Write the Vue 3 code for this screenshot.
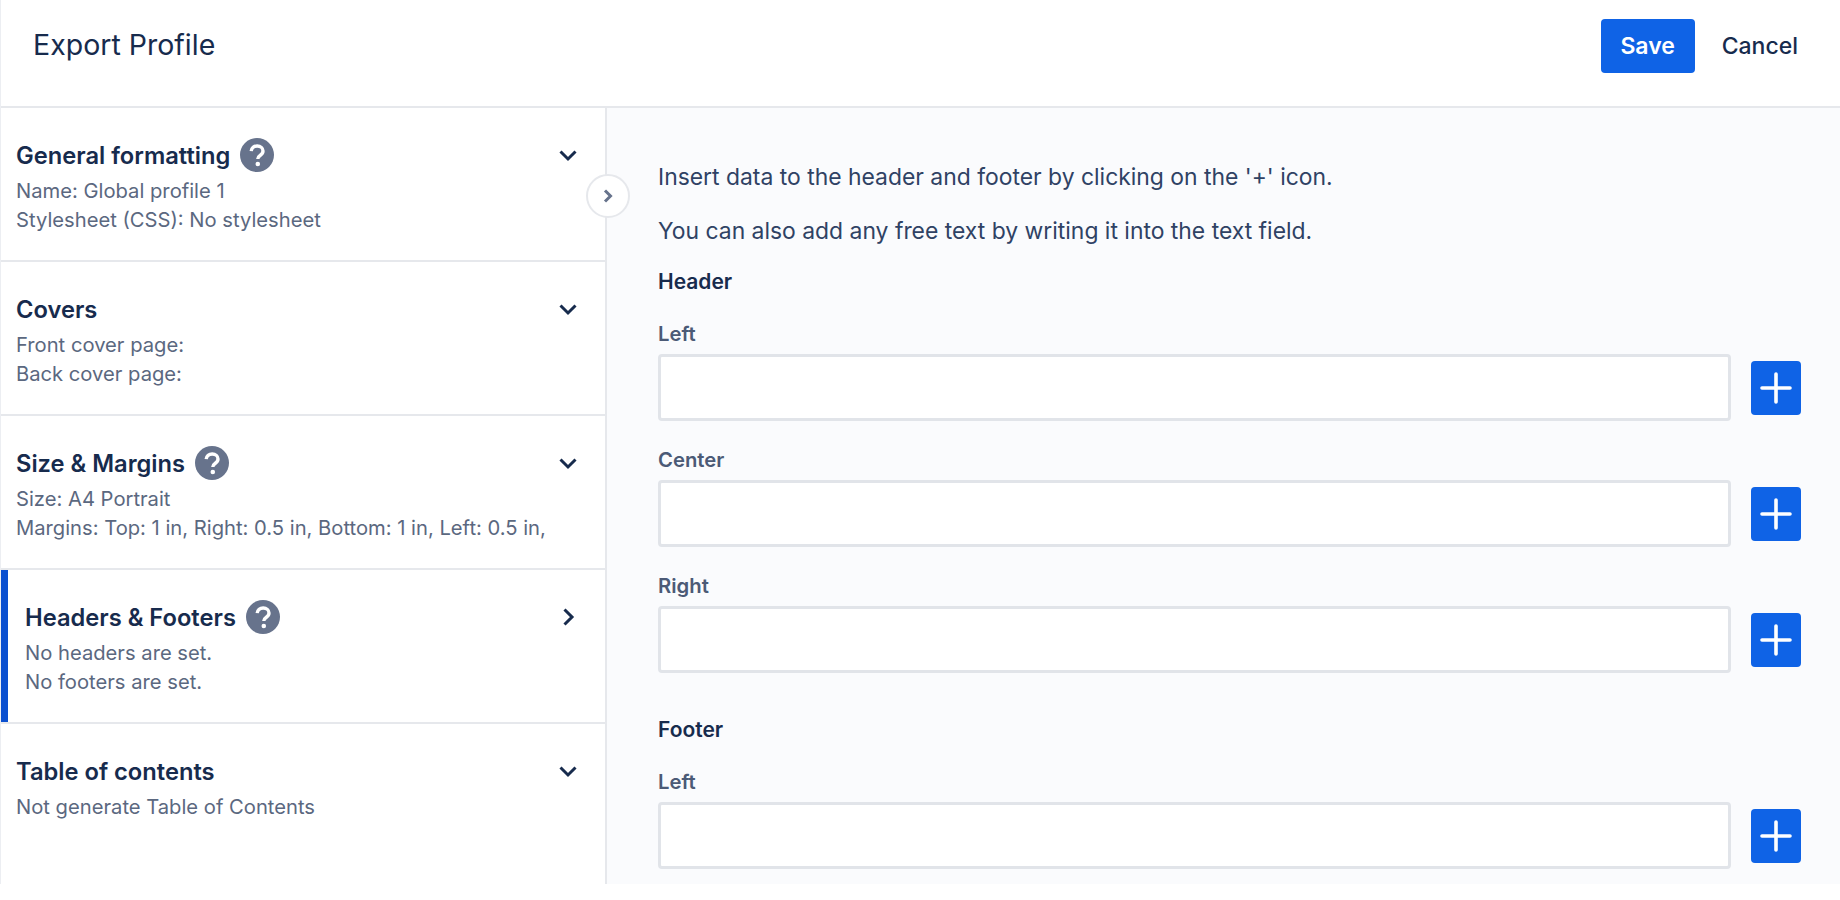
<script setup>
const sections = [
  { title: 'General formatting', help: true, lines: ['Name: Global profile 1', 'Stylesheet (CSS): No stylesheet'] },
  { title: 'Covers', help: false, lines: ['Front cover page:', 'Back cover page:'] },
  { title: 'Size & Margins', help: true, lines: ['Size: A4 Portrait', 'Margins: Top: 1 in, Right: 0.5 in, Bottom: 1 in, Left: 0.5 in,'] },
  { title: 'Headers & Footers', help: true, active: true, lines: ['No headers are set.', 'No footers are set.'] },
  { title: 'Table of contents', help: false, lines: ['Not generate Table of Contents'] },
]
const groups = [
  { name: 'Header', fields: ['Left', 'Center', 'Right'] },
  { name: 'Footer', fields: ['Left'] },
]
</script>

<template>
  <div class="page">
    <header class="topbar">
      <h1 class="title">Export Profile</h1>
      <div class="actions">
        <button class="save">Save</button>
        <button class="cancel">Cancel</button>
      </div>
    </header>
    <div class="body">
      <aside class="sidebar">
        <section v-for="s in sections" :key="s.title" class="section" :class="{ active: s.active }">
          <div class="section-head">
            <h2 class="section-title">{{ s.title }}</h2>
            <svg v-if="s.help" class="help" viewBox="0 0 34 34">
              <circle cx="17" cy="17" r="17" fill="#67738c" />
              <path d="M11.200 13.200c.3-3.200 2.800-5.200 6-5.200 3.400 0 5.800 2.100 5.800 5 0 2.300-1.300 3.400-2.900 4.500-1.500 1-2.300 1.700-2.300 3.500" fill="none" stroke="#fff" stroke-width="3.400" />
              <circle cx="17.800" cy="26" r="2.300" fill="#fff" />
            </svg>
            <svg class="chev" viewBox="0 0 20 20">
              <path v-if="s.active" d="M6.500 2.500 14 10l-7.500 7.500" />
              <path v-else d="M2.500 6.500 10 14l7.500-7.500" />
            </svg>
          </div>
          <p v-for="l in s.lines" :key="l" class="line">{{ l }}</p>
        </section>
      </aside>
      <main class="main">
        <p class="intro">Insert data to the header and footer by clicking on the '+' icon.</p>
        <p class="intro">You can also add any free text by writing it into the text field.</p>
        <div v-for="g in groups" :key="g.name" class="group">
          <h3 class="group-name">{{ g.name }}</h3>
          <div v-for="f in g.fields" :key="f" class="field">
            <label class="label">{{ f }}</label>
            <div class="row">
              <input class="input" type="text" />
              <button class="add" aria-label="Add">
                <svg viewBox="0 0 32 32" width="32" height="32">
                  <path d="M16 2v28M2 16h28" stroke="#fff" stroke-width="3.600" stroke-linecap="round" fill="none" />
                </svg>
              </button>
            </div>
          </div>
        </div>
      </main>
      <button class="collapse" aria-label="Collapse">
        <svg viewBox="0 0 12 16" width="12" height="16">
          <path d="M3 2.500 8.500 8 3 13.500" fill="none" stroke="#67738c" stroke-width="3" />
        </svg>
      </button>
    </div>
  </div>
</template>

<style>
html, body { margin: 0; background: #fff; }
</style>

<style scoped>
.page {
  height: 884px;
  overflow: hidden;
  display: flex;
  flex-direction: column;
  font-family: Inter, "Liberation Sans", sans-serif;
  color: #172b4d;
  box-sizing: border-box;
  border-left: 1px solid #eceef2;
}
.topbar {
  height: 108px;
  flex: none;
  box-sizing: border-box;
  border-bottom: 2px solid #e6e8ec;
  display: flex;
  align-items: flex-start;
  justify-content: space-between;
  padding: 19px 42px 0 32px;
}
.title {
  margin: 0;
  font-size: 28.500px;
  font-weight: 400;
  line-height: 52px;
}
.actions { display: flex; align-items: center; gap: 27px; }
.save {
  width: 94px;
  height: 54px;
  border: 0;
  border-radius: 4px;
  background: #0f63e6;
  color: #fff;
  font: 600 23px Inter, sans-serif;
}
.cancel {
  border: 0;
  padding: 0;
  background: none;
  color: #172b4d;
  font: 500 23px Inter, sans-serif;
}
.body { flex: 1; display: flex; position: relative; min-height: 0; }
.sidebar {
  width: 606px;
  flex: none;
  box-sizing: border-box;
  border-right: 2px solid #e6e8ec;
}
.section {
  height: 154px;
  box-sizing: border-box;
  padding: 30px 11px 0 15px;
  border-bottom: 2px solid #e6e8ec;
}
.section:last-child { border-bottom: 0; }
.section.active {
  margin-left: -1px;
  padding-left: 25px;
  box-shadow: inset 8px 0 0 #0b50d0;
}
.section-head { display: flex; align-items: center; height: 34px; margin-bottom: 4px; }
.section-title { margin: 0; font-size: 23.700px; font-weight: 600; }
.help { width: 34px; height: 34px; margin-left: 10px; }
.chev {
  width: 20px;
  height: 20px;
  margin-left: auto;
  margin-right: 16px;
  fill: none;
  stroke: #172b4d;
  stroke-width: 3;
}
.line { margin: 0; font-size: 20.200px; line-height: 29px; color: #5b6880; }
.main {
  flex: 1;
  min-width: 0;
  background: #fafbfd;
  padding: 54px 39px 0 51px;
}
.intro { margin: 0 0 24px; font-size: 22.900px; line-height: 30px; color: #2f4264; }
.group { margin-bottom: 45px; }
.group-name { margin: 2px 0 28px; font-size: 21px; line-height: 24px; font-weight: 600; }
.field { margin-bottom: 27px; }
.label { display: block; font-size: 20.300px; line-height: 24px; font-weight: 600; color: #4b5a76; margin-bottom: 8px; }
.row { display: flex; align-items: center; gap: 20px; }
.input {
  flex: 1;
  min-width: 0;
  height: 67px;
  box-sizing: border-box;
  border: 3px solid #e1e4e9;
  border-radius: 4px;
  background: #fff;
}
.add {
  width: 50px;
  height: 54px;
  flex: none;
  border: 0;
  padding: 0;
  border-radius: 4px;
  background: #0f63e6;
  display: flex;
  align-items: center;
  justify-content: center;
}
.collapse {
  position: absolute;
  left: 585px;
  top: 66px;
  width: 44px;
  height: 44px;
  padding: 0;
  border-radius: 50%;
  border: 2px solid #e6e8ec;
  background: #fff;
  display: flex;
  align-items: center;
  justify-content: center;
}
</style>
